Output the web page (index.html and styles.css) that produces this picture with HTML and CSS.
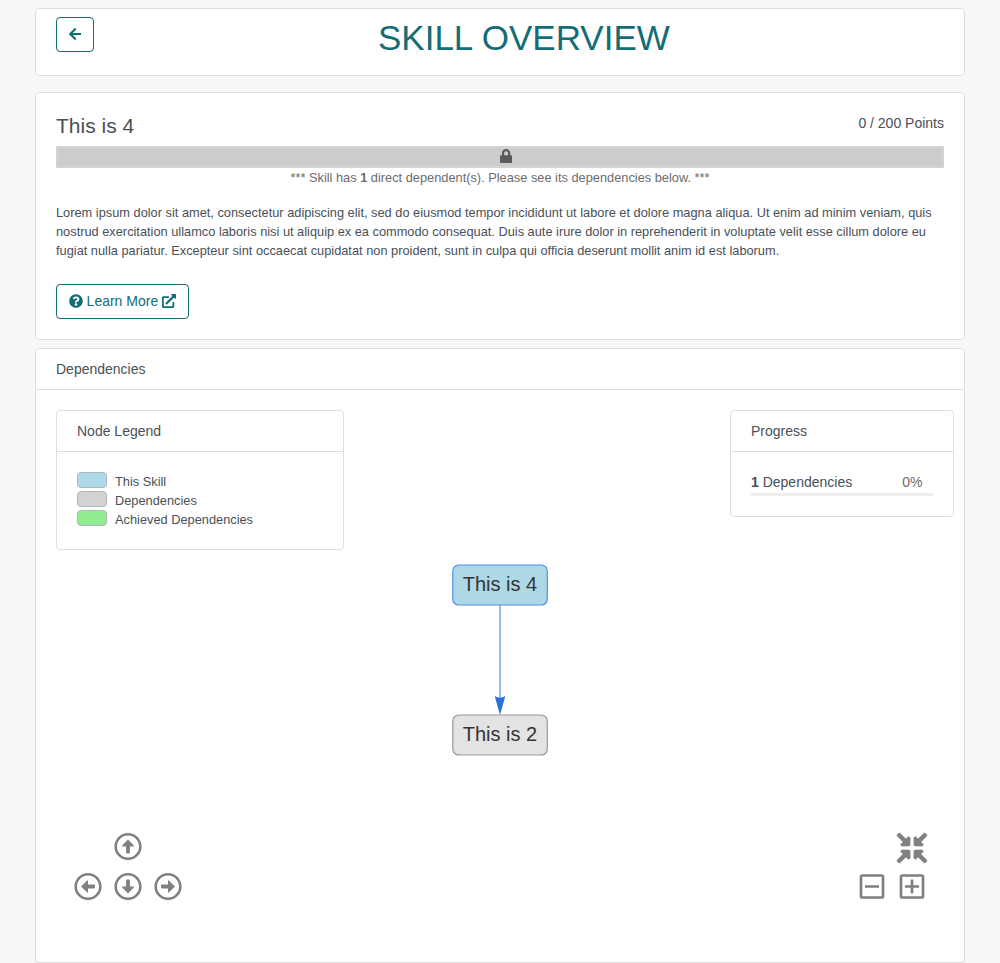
FILE: index.html
```html
<!DOCTYPE html>
<html lang="en">
<head>
<meta charset="utf-8">
<title>Skill Overview</title>
<link rel="stylesheet" href="styles.css">
</head>
<body>
<main class="page">
  <header class="card title-card">
    <button class="btn back-btn" aria-label="Back">
      <svg class="icon-back" viewBox="0 0 448 512"><path d="M257.500 445.100l-22.200 22.200c-9.400 9.400-24.600 9.400-33.900 0L7 273c-9.400-9.400-9.400-24.600 0-33.900L201.400 44.700c9.400-9.400 24.600-9.400 33.900 0l22.200 22.200c9.500 9.500 9.300 25-.4 34.300L136.600 216H424c13.300 0 24 10.700 24 24v32c0 13.300-10.700 24-24 24H136.600l120.500 114.800c9.800 9.300 10 24.800.4 34.300z"/></svg>
    </button>
    <h1 class="page-title">SKILL OVERVIEW</h1>
  </header>

  <section class="card skill-card">
    <div class="skill-head">
      <h2 class="skill-name">This is 4</h2>
      <span class="points">0 / 200 Points</span>
    </div>
    <div class="locked-bar">
      <svg class="icon-lock" viewBox="0 0 448 512"><path d="M400 224h-24v-72C376 68.200 307.800 0 224 0S72 68.200 72 152v72H48c-26.500 0-48 21.500-48 48v192c0 26.500 21.500 48 48 48h352c26.500 0 48-21.500 48-48V272c0-26.500-21.500-48-48-48zm-104 0H152v-72c0-39.700 32.300-72 72-72s72 32.300 72 72v72z"/></svg>
    </div>
    <p class="lock-note">*** Skill has <b>1</b> direct dependent(s). Please see its dependencies below. ***</p>
    <p class="description">Lorem ipsum dolor sit amet, consectetur adipiscing elit, sed do eiusmod tempor incididunt ut labore et dolore magna aliqua. Ut enim ad minim veniam, quis nostrud exercitation ullamco laboris nisi ut aliquip ex ea commodo consequat. Duis aute irure dolor in reprehenderit in voluptate velit esse cillum dolore eu fugiat nulla pariatur. Excepteur sint occaecat cupidatat non proident, sunt in culpa qui officia deserunt mollit anim id est laborum.</p>
    <button class="btn learn-btn">
      <svg class="icon-btn" viewBox="0 0 512 512"><path d="M504 256c0 137-111 248-248 248S8 393 8 256C8 119.100 119 8 256 8s248 111.100 248 248zM262.700 90c-54.500 0-89.300 23-116.500 63.800-3.500 5.300-2.400 12.400 2.700 16.300l34.700 26.300c5.200 3.900 12.600 3 16.700-2.100 17.900-22.700 30.100-35.800 57.300-35.800 20.400 0 45.700 13.100 45.700 33 0 15-12.400 22.700-32.500 34C247.100 238.500 216 254.900 216 296v4c0 6.600 5.400 12 12 12h56c6.600 0 12-5.400 12-12v-1.300c0-28.500 83.200-29.600 83.200-106.700 0-58-60.200-102-116.500-102zM256 338c-25.400 0-46 20.600-46 46 0 25.400 20.600 46 46 46s46-20.600 46-46c0-25.400-20.600-46-46-46z"/></svg>
      <span>Learn More</span>
      <svg class="icon-btn" viewBox="0 0 512 512"><path d="M432 288h-32a16 16 0 0 0-16 16v144H64V144h176a16 16 0 0 0 16-16V96a16 16 0 0 0-16-16H48a48 48 0 0 0-48 48v336a48 48 0 0 0 48 48h352a48 48 0 0 0 48-48V304a16 16 0 0 0-16-16zM488 0H360c-21.400 0-32 25.900-17 41l35.700 35.700L135 320.400a24 24 0 0 0 0 34L157.700 377a24 24 0 0 0 34 0l243.600-243.700L471 169c15 15 41 4.500 41-17V24a24 24 0 0 0-24-24z"/></svg>
    </button>
  </section>

  <section class="card graph-card">
    <div class="card-header">Dependencies</div>
    <div class="graph-body">
      <div class="panels">
        <div class="card legend">
          <div class="card-header">Node Legend</div>
          <ul class="legend-list">
            <li><i class="swatch swatch-this"></i>This Skill</li>
            <li><i class="swatch swatch-dep"></i>Dependencies</li>
            <li><i class="swatch swatch-done"></i>Achieved Dependencies</li>
          </ul>
        </div>
        <div class="card progress">
          <div class="card-header">Progress</div>
          <div class="progress-body">
            <div class="progress-row"><span><b>1</b> Dependencies</span><span class="percent">0%</span></div>
            <div class="track"></div>
          </div>
        </div>
      </div>

      <svg class="graph" viewBox="0 0 120 210">
        <path class="edge" d="M60 50V144"/>
        <path class="arrow" d="M60 160L54.700 141Q60 144.500 65.300 141Z"/>
        <rect class="node node-this" x="12.800" y="10" width="94.500" height="40" rx="6"/>
        <rect class="node node-dep" x="12.800" y="160" width="94.500" height="40" rx="6"/>
        <text class="node-label" x="60" y="36">This is 4</text>
        <text class="node-label" x="60" y="186">This is 2</text>
      </svg>

      <div class="controls">
        <svg class="pan" viewBox="0 0 110 70">
          <defs>
            <g id="arrow-button">
              <circle r="12.300" fill="none" stroke="#808080" stroke-width="2.600"/>
              <path d="M0-7L6-.8Q6.500 0 5.500 0H1.900V6.200Q1.900 7 1.100 7H-1.100Q-1.900 7-1.900 6.200V0H-5.500Q-6.500 0-6-.8Z" fill="#808080"/>
            </g>
          </defs>
          <use href="#arrow-button" transform="translate(54 14.500)"/>
          <use href="#arrow-button" transform="translate(14 54.500) rotate(-90)"/>
          <use href="#arrow-button" transform="translate(54 54.500) rotate(180)"/>
          <use href="#arrow-button" transform="translate(94 54.500) rotate(90)"/>
        </svg>
        <svg class="zoom" viewBox="0 0 70 70">
          <defs>
            <path id="inward" fill="#808080" stroke="#808080" stroke-width="9" transform="scale(.0586) translate(-256 -256)" d="M200 288H88c-21.400 0-32.100 25.800-17 41l32.900 31-99.200 99.300c-6.200 6.200-6.200 16.400 0 22.600l25.400 25.400c6.200 6.200 16.400 6.200 22.600 0L152 408l31.100 33c15.100 15.100 40.900 4.400 40.900-17V312c0-13.300-10.700-24-24-24z"/>
          </defs>
          <g transform="translate(54 16)">
            <use href="#inward"/>
            <use href="#inward" transform="rotate(90)"/>
            <use href="#inward" transform="rotate(180)"/>
            <use href="#inward" transform="rotate(270)"/>
          </g>
          <g fill="none" stroke="#808080" stroke-width="2.700">
            <rect x="3" y="43.500" width="22" height="22" rx="1.500"/>
            <rect x="43" y="43.500" width="22" height="22" rx="1.500"/>
            <path d="M7 54.500H21M47 54.500H61M54 47.500V61.500"/>
          </g>
        </svg>
      </div>
    </div>
  </section>
</main>
</body>
</html>
```

FILE: styles.css
```css
* { box-sizing: border-box; }
body {
  margin: 0;
  background: #f7f7f7;
  color: #495057;
  font: 14px/21px "Liberation Sans", Arial, sans-serif;
}
h1, h2, p, ul { margin: 0; padding: 0; font-weight: 400; }
svg { display: block; }
.page { width: 930px; height: 963px; margin: 0 auto; padding-top: 8px; display: flex; flex-direction: column; }
.card { flex-shrink: 0; background: #fff; border: 1px solid #dfdfdf; border-radius: 4px; }
.card-header { height: 41px; padding: 10px 20px; border-bottom: 1px solid #dfdfdf; line-height: 21px; }

.title-card { height: 68px; display: flex; align-items: flex-start; padding: 8px 10.500px 0 20px; margin-bottom: 16px; }
.page-title { flex: 1; text-align: center; font-size: 35px; line-height: 42px; color: #146c75; }
.btn {
  height: 35px; padding: 0 12px; display: inline-flex; align-items: center; gap: 3.900px;
  background: #fff; border: 1px solid #146c75; border-radius: 4px; color: #146c75;
  font: inherit; fill: currentColor; white-space: nowrap;
}
.btn svg { flex-shrink: 0; margin-bottom: 1.500px; }
.icon-back { width: 12.250px; height: 14px; }
.icon-btn { width: 14px; height: 14px; }

.skill-card { height: 248px; padding: 20px; margin-bottom: 8px; }
.skill-head { height: 33px; display: flex; justify-content: space-between; }
.skill-name { font-size: 21px; line-height: 26px; }
.points { line-height: 21px; }
.locked-bar { height: 22px; border: 2px solid #d3d3d3; background: #ccc; display: flex; justify-content: center; padding: 1px 0 0 12px; }
.icon-lock { width: 12.250px; height: 14px; fill: #5a5a5a; }
.lock-note { text-align: center; font-size: 12.800px; line-height: 20px; color: #6c6c6c; }
.description { margin-top: 15px; font-size: 12.800px; line-height: 19px; }
.learn-btn { width: 133px; margin-top: 24px; justify-content: flex-start; gap: 3.600px; }

.graph-card { flex: 1 0 0; }
.graph-body { height: 572px; display: flex; flex-direction: column; padding: 20px 10px 0 20px; }
.panels { height: 145px; display: flex; justify-content: space-between; align-items: flex-start; }
.legend { width: 288px; height: 140px; }
.legend-list { list-style: none; padding: 20px; font-size: 12.800px; line-height: 19px; }
.legend-list li { display: flex; gap: 8px; }
.swatch { width: 30px; height: 16px; border: 1px solid #adb5bd; border-radius: 4px; }
.swatch-this { background: #add8e6; }
.swatch-dep { background: #d3d3d3; }
.swatch-done { background: #90ee90; }
.progress { width: 224px; height: 107px; }
.progress-body { padding: 20px; }
.progress-row { display: flex; justify-content: space-between; padding-right: 10.500px; }
.percent { color: #6c6c6c; }
.track { height: 3px; background: #eee; }
.graph { width: 120px; height: 210px; margin-left: 384px; }
.node { stroke-width: 1.200; }
.node-this { fill: #add8e6; stroke: #4f8ee8; }
.node-dep { fill: #e3e3e3; stroke: #999; }
.node-label { font-size: 20px; text-anchor: middle; fill: #343434; }
.edge { stroke: #7da5ec; stroke-width: 1.500; }
.arrow { fill: #2b6fdf; }
.controls { margin-top: 67px; display: flex; justify-content: space-between; padding: 0 26px 0 18px; }
.pan { width: 110px; height: 70px; }
.zoom { width: 70px; height: 70px; }
```
